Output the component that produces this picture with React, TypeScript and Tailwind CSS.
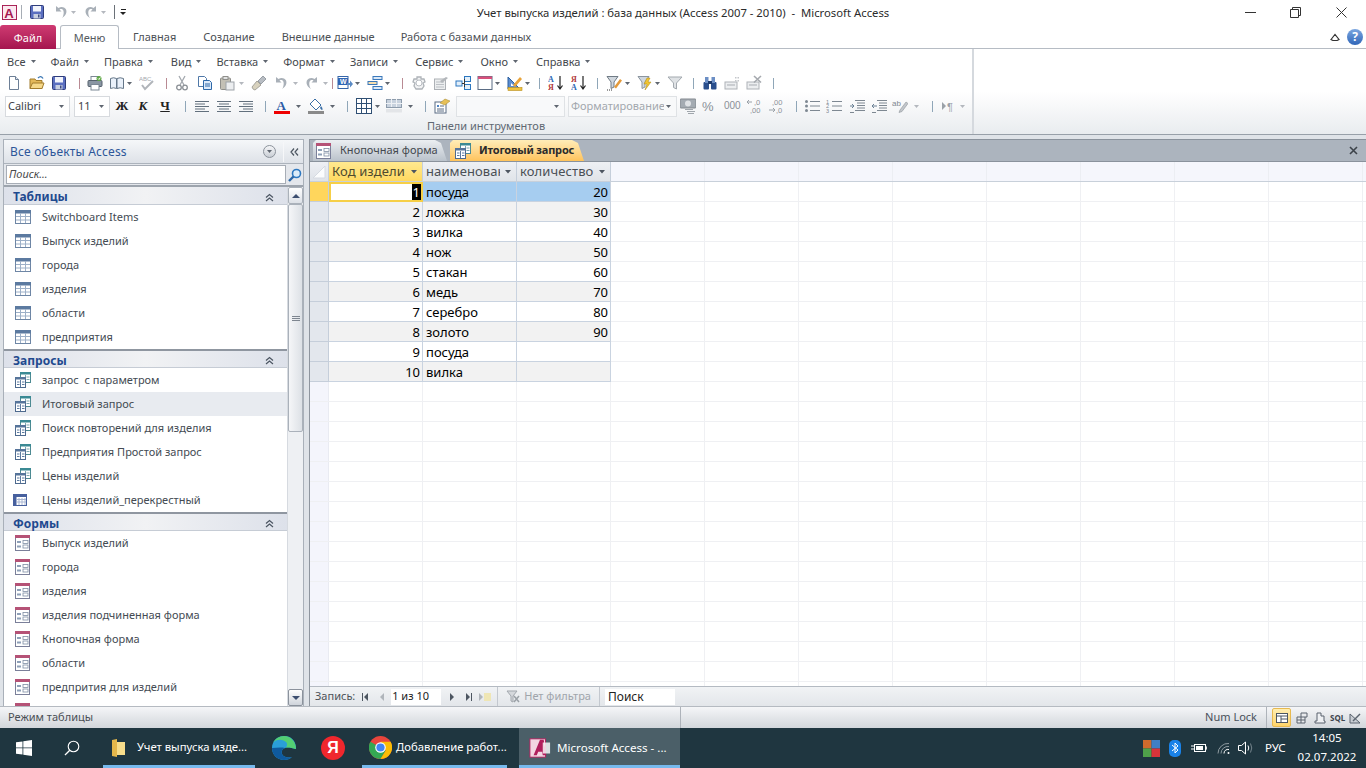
import React from "react";

type P = { className?: string };
const S = ({ className = "", children }: P & { children: React.ReactNode }) => (
  <svg viewBox="0 0 16 16" className={`w-4 h-4 shrink-0 ${className}`}>{children}</svg>
);
const Arrow = ({ className = "" }: P) => (
  <svg viewBox="0 0 5 3" className={`w-[5px] h-[3px] shrink-0 ${className}`}><path d="M0 0h5L2.5 3z" fill="#5f6670" /></svg>
);
const ArrowOff = ({ className = "" }: P) => (
  <svg viewBox="0 0 5 3" className={`w-[5px] h-[3px] shrink-0 ${className}`}><path d="M0 0h5L2.5 3z" fill="#b4b8be" /></svg>
);
const Sep = ({ className = "" }: P) => <div className={`w-px h-[11px] shrink-0 bg-[#8fa6b8] ${className}`} />;
const SepR = ({ className = "" }: P) => <div className={`w-px h-[11px] shrink-0 bg-[#b98a93] ${className}`} />;

const New = (p: P) => <S {...p}><path d="M3.5 1.5h6l3 3v10h-9z" fill="#fff" stroke="#6d7f96" /><path d="M9.5 1.5v3h3" fill="#dfe6ef" stroke="#6d7f96" /></S>;
const Open = (p: P) => <S {...p}><path d="M1 4h5l1 1.500h6v8H1z" fill="#e4b95a" stroke="#a27c2d" /><path d="M3.500 8H15l-2 5.500H1z" fill="#f6d98a" stroke="#a27c2d" /><path d="M9 3q3-3 5 .5" fill="none" stroke="#3c78b4" strokeWidth="1.400" /></S>;
const Save = (p: P) => <S {...p}><rect x="1.500" y="1.500" width="13" height="13" rx="1" fill="#5b6fc0" stroke="#2f3d7c" /><rect x="4" y="2" width="8" height="5.500" fill="#f2f4fb" /><rect x="4.500" y="10" width="7" height="4.500" fill="#c9d0e0" /><rect x="9" y="10.500" width="1.500" height="3" fill="#3c4a80" /></S>;
const Print = (p: P) => <S {...p}><rect x="4" y="1.500" width="8" height="4" fill="#fff" stroke="#7b8794" /><rect x="1" y="5.500" width="14" height="6" rx="1" fill="#8a96a3" stroke="#55606c" /><rect x="4" y="9.500" width="8" height="5.500" fill="#fff" stroke="#7b8794" /><circle cx="12" cy="3.500" r="2.500" fill="#5fa845" /><path d="M11 3.500l1 1 1.300-2" stroke="#fff" fill="none" /></S>;
const Preview = (p: P) => <S {...p}><path d="M1.500 3.500q3-1.500 6 0v10q-3-1.500-6 0zM8 3.500q3-1.500 6.500 0v10q-3.500-1.500-6.500 0z" fill="#eaf1fa" stroke="#657789" /></S>;
const Spell = (p: P) => <S {...p}><text x="0" y="6" fontSize="6" fontFamily="Liberation Sans" fill="#a5a9ae">ABC</text><path d="M3 10l3 4 8-8" stroke="#b1b5ba" strokeWidth="2" fill="none" /></S>;
const Cut = (p: P) => <S {...p}><path d="M5 1l5 9M11 1L6 10" stroke="#a3a8ae" strokeWidth="1.300" /><circle cx="5" cy="12.500" r="2.300" fill="none" stroke="#8b9096" strokeWidth="1.300" /><circle cx="11" cy="12.500" r="2.300" fill="none" stroke="#8b9096" strokeWidth="1.300" /></S>;
const Copy = (p: P) => <S {...p}><path d="M1.500 1.500h6l2 2v8h-8z" fill="#fff" stroke="#4f78a8" /><path d="M6.500 5.500h6l2 2v7h-8z" fill="#dceafa" stroke="#2e68a8" /><path d="M8 9h5M8 11h5" stroke="#2e68a8" /></S>;
const Paste = (p: P) => <S {...p}><rect x="1.500" y="3" width="10" height="11.500" rx="1" fill="#c3c0b5" stroke="#8f8f8b" /><rect x="4" y="1.500" width="5" height="3" fill="#e1e2e2" stroke="#8f8f8b" /><rect x="7" y="7" width="8" height="8" fill="#eceef0" stroke="#9ea3a9" /></S>;
const Brush = (p: P) => <S {...p}><path d="M1 12l5-6 4 4-6 5q-2 0-3-3z" fill="#d8d2be" stroke="#a5a39a" /><path d="M7 6l5-5 3 3-5 5z" fill="#b8bdc3" stroke="#989ea5" /></S>;
const Undo = ({ className = "", c = "#a9b0b8" }: P & { c?: string }) => <S className={className}><path d="M3 2v5.500h5.500L6.500 5.500c3-1.500 5.500 1 3.500 7l-1 1.500c5-3 6-8.500 2-10.500-2-1-4-.5-5.500.5z" fill={c} /></S>;
const Redo = ({ className = "", c = "#a9b0b8" }: P & { c?: string }) => <S className={className}><path d="M13 2v5.500H7.500l2-2c-3-1.500-5.500 1-3.500 7l1 1.500c-5-3-6-8.500-2-10.500 2-1 4-.5 5.500.5z" fill={c} /></S>;
const Word = (p: P) => <S {...p}><rect x="1" y="1.500" width="10" height="12" fill="#fff" stroke="#3565a8" /><rect x="1" y="3" width="10" height="7" fill="#2f66b5" /><text x="3" y="9" fontSize="7" fontWeight="bold" fontFamily="Liberation Sans" fill="#fff">W</text><path d="M10 8h3V5.500L16 9l-3 3.500V10h-3z" fill="#5a8ac4" /></S>;
const Code = (p: P) => <S {...p}><rect x="6" y="1.500" width="9" height="3" fill="#dbe9f8" stroke="#3b79bb" /><rect x="1" y="6.500" width="9" height="3" fill="#f6dfb0" stroke="#3b79bb" /><rect x="6" y="11.500" width="9" height="3" fill="#dbe9f8" stroke="#3b79bb" /></S>;
const Ring = (p: P) => <S {...p}><path d="M3 4h3V2h4v2h3l1 3-2 1 1 3-2 3H5l-2-3 1-3-2-1z" fill="#f2f3f4" stroke="#aeb3b8" strokeWidth="1.300" /><circle cx="8" cy="8" r="3" fill="#fff" stroke="#b9bdc2" /></S>;
const FormOff = (p: P) => <S {...p}><rect x="1.500" y="4" width="11" height="10.500" fill="#eceeef" stroke="#adb1b6" /><path d="M3 7h8M3 9.500h8M3 12h8" stroke="#bcc0c5" /><path d="M7 6l6-4 2 1-6 5z" fill="#b3b7bb" /></S>;
const Rel = (p: P) => <S {...p}><rect x="1" y="6" width="6" height="5" fill="#e2effa" stroke="#2c77c0" /><rect x="9.500" y="1.500" width="6" height="5" fill="#e2effa" stroke="#2c77c0" /><rect x="9.500" y="9.500" width="6" height="5" fill="#e2effa" stroke="#2c77c0" /><path d="M7 8.500h2.500V4M9.500 8.500V12" stroke="#333" fill="none" /></S>;
const Win = (p: P) => <S {...p}><rect x="1" y="1.500" width="14" height="13" fill="#fff" stroke="#5a6c84" /><rect x="1" y="1.500" width="14" height="2.500" fill="#d9507b" /></S>;
const Design = (p: P) => <S {...p}><path d="M1 2v12h12z" fill="#5d8ed0" stroke="#2b5f9f" /><path d="M4 8v3h3z" fill="#fff" /><rect x="1" y="12.500" width="14" height="3" fill="#f0c23e" stroke="#b78d1b" strokeWidth=".6" /><path d="M6 10L13 2l2 2-7 8z" fill="#e8a33a" /></S>;
const Az = (p: P) => <S {...p}><text x="0" y="7" fontSize="8" fontWeight="bold" fontFamily="Liberation Serif" fill="#2a66b4">А</text><text x="0" y="15" fontSize="8" fontWeight="bold" fontFamily="Liberation Serif" fill="#b13a3a">Я</text><path d="M12 1v12M9.500 10.500L12 14l2.500-3.500" fill="none" stroke="#222" strokeWidth="1.200" /></S>;
const Za = (p: P) => <S {...p}><text x="0" y="7" fontSize="8" fontWeight="bold" fontFamily="Liberation Serif" fill="#b13a3a">Я</text><text x="0" y="15" fontSize="8" fontWeight="bold" fontFamily="Liberation Serif" fill="#2a66b4">А</text><path d="M12 1v12M9.500 10.500L12 14l2.500-3.500" fill="none" stroke="#222" strokeWidth="1.200" /></S>;
const Filter1 = (p: P) => <S {...p}><path d="M1 1.500h11L8 7v5L5 13.500V7z" fill="#d0d7de" stroke="#707b85" /><path d="M8 12l6-8 2 1.500-6 8z" fill="#e39a3b" /><path d="M1 15h5" stroke="#333" strokeDasharray="1 1" /></S>;
const Filter2 = (p: P) => <S {...p}><path d="M1 1.500h11L8 7v5L5 13.500V7z" fill="#d0d7de" stroke="#8b959f" /><path d="M10 3l-3 6h3l-2 6 6-8h-3l2-4z" fill="#f2c530" stroke="#a98716" strokeWidth=".5" /></S>;
const Funnel = (p: P) => <S {...p}><path d="M1 2h14L9.500 8v6l-3-1.500V8z" fill="#dfe2e5" stroke="#a3a9af" /></S>;
const Bin = (p: P) => <S {...p}><rect x="1.500" y="7" width="5.500" height="7.500" rx="1" fill="#2a4f8d" /><rect x="9" y="7" width="5.500" height="7.500" rx="1" fill="#2a4f8d" /><rect x="3" y="2" width="3.500" height="6" fill="#6c8fc5" /><rect x="9.500" y="2" width="3.500" height="6" fill="#6c8fc5" /><rect x="6" y="6" width="4" height="3" fill="#1d3a6c" /></S>;
const Rec1 = (p: P) => <S {...p}><rect x="1" y="7" width="12" height="7" fill="#eceef0" stroke="#aeb2b7" /><path d="M3 10h8" stroke="#a7abb1" /><path d="M11 2h1.500v1.500H11zM13.500 2H15v1.500h-1.500zM11 5h1.500v1.500H11zM13.500 5H15v1.500h-1.500z" fill="#c3c6ca" /></S>;
const Rec2 = (p: P) => <S {...p}><rect x="1" y="7" width="12" height="7" fill="#eceef0" stroke="#aeb2b7" /><path d="M3 10h8" stroke="#a7abb1" /><path d="M8 1l7 6.500M15 1L8 7.500" stroke="#a5a9ae" strokeWidth="1.600" /></S>;
const AlignL = (p: P) => <S {...p}><path d="M1 3.500h14M1 6h10M1 8.500h14M1 11h10M1 13.500h14" stroke="#62707d" /></S>;
const AlignC = (p: P) => <S {...p}><path d="M1 3.500h14M3 6h10M1 8.500h14M3 11h10M1 13.500h14" stroke="#62707d" /></S>;
const AlignR = (p: P) => <S {...p}><path d="M1 3.500h14M5 6h10M1 8.500h14M5 11h10M1 13.500h14" stroke="#62707d" /></S>;
const FontA = (p: P) => <S {...p}><text x="2.500" y="12" fontSize="13" fontWeight="bold" fontFamily="Liberation Serif" fill="#2a5aa5">A</text><rect x="0" y="13" width="16" height="3" fill="#ee0000" /></S>;
const Fill = (p: P) => <S {...p}><path d="M7 1l6 6-5 5-6-6z" fill="#fff" stroke="#3a6ea5" /><path d="M13 8q2 2 1.500 3.500T12 10z" fill="#3a6ea5" /><rect x="0" y="13" width="16" height="3" fill="#8a8a8a" /></S>;
const Grid = (p: P) => <S {...p}><rect x=".5" y=".5" width="15" height="15" fill="#fff" stroke="#2f4f73" /><path d="M5.500 0v16M10.500 0v16M0 5.500h16M0 10.500h16" stroke="#2f4f73" /></S>;
const AltRows = (p: P) => <S {...p}><rect x=".5" y="1.500" width="15" height="8" fill="#c8d2de" stroke="#8d9cac" /><path d="M0 5.500h16M5.500 1v8M10.500 1v8" stroke="#eef1f5" /><rect x="0" y="11" width="16" height="3.500" fill="#e3e5e8" /></S>;
const Props = (p: P) => <S {...p}><rect x="1" y="4" width="11" height="11" fill="#fff" stroke="#5b6d84" /><rect x="3" y="7" width="2" height="2" fill="#4e84c4" /><path d="M6 8h4M3 11h7M3 13h7" stroke="#5b6d84" /><path d="M6 5l5-4 5 2-5 4z" fill="#e7c058" stroke="#a18429" strokeWidth=".5" /></S>;
const Money = (p: P) => <S {...p}><rect x="0" y="1" width="16" height="9" rx="1" fill="#a4abb2" stroke="#83898f" /><ellipse cx="8" cy="5.500" rx="3" ry="3" fill="#dfe2e5" /><path d="M5 11.500h8M7 13.500h8M8 15.500h6" stroke="#a0a6ac" /></S>;
const Pct = (p: P) => <S {...p}><text x="1" y="13" fontSize="13" fontFamily="Liberation Sans" fill="#8a9097">%</text></S>;
const Dec1 = (p: P) => <S {...p}><text x="8" y="7" fontSize="7.500" fontFamily="Liberation Sans" fill="#8a9097">,0</text><text x="4" y="15" fontSize="7.500" fontFamily="Liberation Sans" fill="#8a9097">,00</text><path d="M6 4H1m2-2L1 4l2 2" stroke="#9aa1a8" fill="none" /></S>;
const Dec2 = (p: P) => <S {...p}><text x="4" y="7" fontSize="7.500" fontFamily="Liberation Sans" fill="#8a9097">,00</text><text x="8" y="15" fontSize="7.500" fontFamily="Liberation Sans" fill="#8a9097">,0</text><path d="M1 12h6m-2-2l2 2-2 2" stroke="#9aa1a8" fill="none" /></S>;
const Bullets = (p: P) => <S {...p}><path d="M6 3.500h10M6 8h10M6 12.500h10" stroke="#7e8892" /><circle cx="2.500" cy="3.500" r="1.500" fill="#7e8892" /><circle cx="2.500" cy="8" r="1.500" fill="#7e8892" /><circle cx="2.500" cy="12.500" r="1.500" fill="#7e8892" /></S>;
const Numbers = (p: P) => <S {...p}><path d="M6 3.500h10M6 8h10M6 12.500h10" stroke="#7e8892" /><text x="0" y="5.500" fontSize="5.500" fontFamily="Liberation Sans" fill="#7e8892">1</text><text x="0" y="10" fontSize="5.500" fontFamily="Liberation Sans" fill="#7e8892">2</text><text x="0" y="15" fontSize="5.500" fontFamily="Liberation Sans" fill="#7e8892">3</text></S>;
const IndentA = (p: P) => <S {...p}><path d="M6 2.500h10M8 5h8M8 7.500h8M8 10h8M6 12.500h10M1 14.500h4" stroke="#7e8892" /><path d="M1 8h4m-2-2l2 2-2 2" stroke="#6a8094" fill="none" /></S>;
const IndentB = (p: P) => <S {...p}><path d="M6 2.500h10M8 5h8M8 7.500h8M8 10h8M6 12.500h10M1 14.500h4" stroke="#7e8892" /><path d="M6 8H1m2-2L1 8l2 2" stroke="#6a8094" fill="none" /></S>;
const Ab = (p: P) => <S {...p}><text x="0" y="8" fontSize="8" fontFamily="Liberation Sans" fill="#7f8790">ab</text><path d="M8 12l6-8 2 1.500-6 8-3 1z" fill="#c2c6cb" stroke="#8f959b" strokeWidth=".6" /></S>;
const Para = (p: P) => <S {...p}><path d="M1 4v8l4-4z" fill="#9aa1a8" /><text x="6" y="13" fontSize="11" fontFamily="Liberation Sans" fill="#9aa1a8">¶</text></S>;

const TableI = ({ className = "" }: P) => (
  <svg viewBox="0 0 16 14" className={`w-4 h-[14px] shrink-0 ${className}`}>
    <rect x=".5" y=".5" width="15" height="13" fill="#fff" stroke="#6e86a5" />
    <rect x="0" y="0" width="16" height="3.500" fill="#5c7aa0" />
    <path d="M5.500 3v10M10.500 3v10M1 6.500h14M1 10h14" stroke="#9db0c8" />
  </svg>
);
const QueryI = ({ className = "" }: P) => (
  <svg viewBox="0 0 16 16" className={`w-4 h-4 shrink-0 ${className}`}>
    <rect x="5.500" y=".5" width="10" height="10" fill="#fff" stroke="#4d8a92" />
    <rect x="5" y="0" width="11" height="2.500" fill="#3b8a94" />
    <path d="M10.500 3v7M11.500 5h3M11.500 7.500h3" stroke="#7ca7ae" />
    <rect x=".5" y="5.500" width="10" height="10" fill="#fff" stroke="#4e6a8e" />
    <rect x="0" y="5" width="11" height="2.500" fill="#56749a" />
    <path d="M5.500 8v7M2 10h2.500M7 10h2.500M2 12.500h2.500M7 12.500h2.500" stroke="#5d7ba0" />
  </svg>
);
const CrossI = ({ className = "" }: P) => (
  <svg viewBox="0 0 14 12" className={`w-[14px] h-3 shrink-0 ${className}`}>
    <rect x=".5" y=".5" width="13" height="11" fill="#fff" stroke="#47609e" />
    <rect x="0" y="0" width="14" height="3" fill="#47609e" />
    <rect x="0" y="0" width="3.500" height="12" fill="#47609e" />
    <path d="M6 4v7M9 4v7M12 4v7M4 5.500h9M4 8h9" stroke="#a9b6d2" />
  </svg>
);
const FormI = ({ className = "" }: P) => (
  <svg viewBox="0 0 15 16" className={`w-[15px] h-4 shrink-0 ${className}`}>
    <rect x=".5" y=".5" width="14" height="15" fill="#fff" stroke="#7a7f99" />
    <rect x="0" y="0" width="15" height="3" fill="#b55276" />
    <rect x="2" y="6" width="4" height="2" fill="#8ea0b8" />
    <rect x="2" y="10.500" width="4" height="2" fill="#8ea0b8" />
    <rect x="8" y="5.500" width="5" height="3" fill="#fff" stroke="#7e8da3" strokeWidth=".8" />
    <rect x="8" y="10" width="5" height="3" fill="#fff" stroke="#7e8da3" strokeWidth=".8" />
  </svg>
);
const DoubleUp = ({ className = "" }: P) => (
  <svg viewBox="0 0 9 9" className={`w-[9px] h-[9px] shrink-0 ${className}`}>
    <path d="M1 4.500l3.500-3 3.500 3M1 8l3.500-3 3.500 3" fill="none" stroke="#4b5562" strokeWidth="1.200" />
  </svg>
);
const AccessLogo = ({ className = "" }: P) => (
  <svg viewBox="0 0 16 16" className={`shrink-0 ${className}`}>
    <rect x=".5" y=".5" width="15" height="15" fill="#fce9f0" stroke="#a5184f" />
    <text x="2.500" y="13.500" fontSize="14" fontWeight="bold" fontFamily="Liberation Sans" fill="#a5184f">A</text>
  </svg>
);
const Small = ({ c, d }: { c: string; d: string }) => (
  <svg viewBox="0 0 8 8" className="w-2 h-2 shrink-0"><path d={d} fill={c} /></svg>
);

const tables = ["Switchboard Items", "Выпуск изделий", "города", "изделия", "области", "предприятия"];
const queries = ["запрос  с параметром", "Итоговый запрос", "Поиск повторений для изделия", "Предприятия Простой запрос", "Цены изделий", "Цены изделий_перекрестный"];
const forms = ["Выпуск изделий", "города", "изделия", "изделия подчиненная форма", "Кнопочная форма", "области", "предпрития для изделий", ""];
const rows: [number, string, string][] = [
  [1, "посуда", "20"], [2, "ложка", "30"], [3, "вилка", "40"], [4, "нож", "50"], [5, "стакан", "60"],
  [6, "медь", "70"], [7, "серебро", "80"], [8, "золото", "90"], [9, "посуда", ""], [10, "вилка", ""],
];
const blankCols = [0, 1, 2, 3, 4, 5, 6, 7, 8];
const blankRows = Array.from({ length: 16 }, (_, i) => i);

const GroupHead = ({ title, className = "" }: P & { title: string }) => (
  <div className={`h-[18px] flex items-center justify-between pl-[9px] pr-[13px] pt-[3px] bg-gradient-to-r from-[#dde1ea] via-[#f1f2f4] to-[#dde1ea] border-b border-[#c6ccd5] ${className}`}>
    <span className="text-[12px] font-bold text-[#1f4a8f]">{title}</span>
    <DoubleUp />
  </div>
);
const NavItem = ({ icon, text, active }: { icon: React.ReactNode; text: string; active?: boolean }) => (
  <div className={`h-6 flex items-center pl-[11px] text-[11px] text-[#444b53] whitespace-pre ${active ? "bg-[#e8ebf0]" : ""}`}>
    <span className="w-[27px] flex items-center">{icon}</span>
    {text}
  </div>
);
const HeaderCell = ({ text, active, className = "" }: P & { text: string; active?: boolean }) => (
  <div className={`w-[94px] h-full shrink-0 flex items-center pl-[3px] pr-[2px] border-r border-[#c5ceda] text-[13px] ${active ? "bg-gradient-to-b from-[#ffe98f] to-[#ffd95f] text-[#4e4a2e]" : "bg-gradient-to-b from-[#eef0f4] to-[#e0e4e9] text-[#4a4f55]"} ${className}`}>
    <span className="flex-1 overflow-hidden whitespace-nowrap tracking-[0.1px]">{text}</span>
    <svg viewBox="0 0 12 8" className="w-3 h-2 shrink-0 ml-[2px]"><path d="M3 2h6L6 5.500z" fill="#4d5661" /></svg>
  </div>
);

export default function App() {
  return (
    <div className="w-[1366px] h-[768px] flex flex-col overflow-hidden bg-white font-['Noto_Sans','Open_Sans',sans-serif] text-[#3f4348]">
      {/* title bar */}
      <div className="h-6 grid grid-cols-[1fr_auto_1fr] items-center bg-white shrink-0">
        <div className="flex items-center h-full">
          <AccessLogo className="w-[15px] h-[15px] ml-[2px]" />
          <div className="w-px h-[14px] bg-[#a7adb5] ml-1" />
          <Save className="ml-[7px]" />
          <Undo className="ml-2" />
          <ArrowOff className="ml-[2px]" />
          <Redo className="ml-[7px]" />
          <ArrowOff className="ml-[2px]" />
          <div className="w-px h-[14px] bg-[#6b7178] ml-2" />
          <div className="ml-[5px] flex flex-col items-center gap-[2px]">
            <div className="w-[5px] h-px bg-[#222]" />
            <div className="w-0 h-0 border-l-[3px] border-r-[3px] border-t-[3px] border-l-transparent border-r-transparent border-t-[#222]" />
          </div>
        </div>
        <div className="text-[11.3px] pt-[2px] text-[#2b2b2b] whitespace-pre">Учет выпуска изделий : база данных (Access 2007 - 2010)  -  Microsoft Access</div>
        <div className="flex items-center justify-end h-full pr-[19px]">
          <div className="w-[11px] h-px bg-[#333]" />
          <svg viewBox="0 0 11 11" className="w-[11px] h-[11px] ml-[34px]"><path d="M.5 2.500h8v8h-8zM2.500 2.500v-2h8v8h-2" fill="none" stroke="#333" /></svg>
          <svg viewBox="0 0 11 11" className="w-[11px] h-[11px] ml-[35px]"><path d="M.5.500l10 10M10.500.500l-10 10" stroke="#333" /></svg>
        </div>
      </div>
      {/* ribbon tabs */}
      <div className="h-[25px] flex items-end shrink-0 border-b border-[#b6bcc4] text-[11px]">
        <div className="w-14 h-6 pt-[2px] mb-[-1px] rounded-t-[3px] bg-gradient-to-b from-[#cf3a72] to-[#a5154f] text-white flex items-center justify-center">Файл</div>
        <div className="w-[59px] h-6 pt-[2px] mb-[-1px] ml-1 rounded-t-[3px] bg-white border border-b-0 border-[#b6bcc4] flex items-center justify-center text-[#565b61]">Меню</div>
        <div className="h-6 pt-[2px] flex items-center ml-[14px] text-[#4c5055]">Главная</div>
        <div className="h-6 pt-[2px] flex items-center ml-[27px] text-[#4c5055]">Создание</div>
        <div className="h-6 pt-[2px] flex items-center ml-[27px] text-[#4c5055]">Внешние данные</div>
        <div className="h-6 pt-[2px] flex items-center ml-[26px] text-[#4c5055]">Работа с базами данных</div>
        <div className="flex-1 h-6 pt-[2px] flex items-center justify-end pr-[3px]">
          <svg viewBox="0 0 10 8" className="w-[10px] h-2 mr-[7px]"><path d="M1 6.500L5 1.500l4 5-2 1H3z" fill="none" stroke="#333" strokeWidth="1.200" /></svg>
          <div className="w-4 h-4 rounded-full bg-gradient-to-b from-[#7ba6e0] to-[#2f66b8] text-white text-[12px] font-bold flex items-center justify-center">?</div>
        </div>
      </div>
      {/* ribbon */}
      <div className="h-[86px] shrink-0 flex bg-gradient-to-b from-white via-white to-[#e9ecef] border-b border-[#98a0a9]">
        <div className="w-[974px] shrink-0 flex flex-col border-r-2 border-[#d5d9de]">
          <div className="h-[26px] flex items-center text-[11px] text-[#44484d]">
            <span className="ml-[7px]">Все</span><Arrow className="ml-[5px]" />
            <span className="ml-[15px]">Файл</span><Arrow className="ml-[5px]" />
            <span className="ml-[15px]">Правка</span><Arrow className="ml-[5px]" />
            <span className="ml-[18px]">Вид</span><Arrow className="ml-[5px]" />
            <span className="ml-[15px]">Вставка</span><Arrow className="ml-[5px]" />
            <span className="ml-[15px]">Формат</span><Arrow className="ml-[5px]" />
            <span className="ml-[15px]">Записи</span><Arrow className="ml-[5px]" />
            <span className="ml-[17px]">Сервис</span><Arrow className="ml-[5px]" />
            <span className="ml-[17px]">Окно</span><Arrow className="ml-[5px]" />
            <span className="ml-[18px]">Справка</span><Arrow className="ml-[5px]" />
          </div>
          <div className="h-[18px] flex items-center">
            <New className="ml-[6px]" /><Open className="ml-[7px]" /><Save className="ml-[6px]" /><SepR className="ml-[12px]" />
            <Print className="ml-[7px]" /><Preview className="ml-[6px]" /><Arrow className="ml-[2px]" /><Spell className="ml-[7px]" /><SepR className="ml-[11px]" />
            <Cut className="ml-[7px]" /><Copy className="ml-[7px]" /><Paste className="ml-[6px]" /><ArrowOff className="ml-1" /><Brush className="ml-[7px]" />
            <Undo className="ml-[6px]" /><ArrowOff className="ml-1" /><Redo className="ml-[6px]" /><ArrowOff className="ml-[3px]" /><SepR className="ml-1" />
            <Word className="ml-1" /><Arrow className="ml-[2px]" /><Code className="ml-[7px]" /><Arrow className="ml-[2px]" /><SepR className="ml-[12px]" />
            <Ring className="ml-2" /><FormOff className="ml-[6px]" /><Rel className="ml-[6px]" /><Win className="ml-[6px]" /><Arrow className="ml-[2px]" /><Design className="ml-[7px]" /><Arrow className="ml-[2px]" /><Sep className="ml-[9px]" />
            <Az className="ml-2" /><Za className="ml-[7px]" /><Sep className="ml-[10px]" />
            <Filter1 className="ml-2" /><Arrow className="ml-[3px]" /><Filter2 className="ml-[7px]" /><Arrow className="ml-[2px]" /><Funnel className="ml-[7px]" /><Sep className="ml-[10px]" />
            <Bin className="ml-2" /><Rec1 className="ml-[6px]" /><Rec2 className="ml-[6px]" /><Sep className="ml-[11px]" />
          </div>
          <div className="h-6 mt-[2px] flex items-center">
            <div className="w-[65px] h-[21px] ml-[5px] shrink-0 bg-white border border-[#d7dade] flex items-center justify-between pl-[2px] pr-[5px] text-[11px] text-[#3e4247]">Calibri<Arrow /></div>
            <div className="w-9 h-[21px] ml-1 shrink-0 bg-white border border-[#d7dade] flex items-center justify-between pl-[3px] pr-[5px] text-[11px] text-[#3e4247]">11<Arrow /></div>
            <span className="w-4 ml-1 text-center font-['Liberation_Serif'] font-bold text-[13px] text-[#222]">Ж</span>
            <span className="w-4 ml-[5px] text-center font-['Liberation_Serif'] font-bold italic text-[13px] text-[#222]">К</span>
            <span className="w-4 ml-[6px] text-center font-['Liberation_Serif'] font-bold underline text-[13px] text-[#222]">Ч</span>
            <Sep className="ml-3" /><AlignL className="ml-2" /><AlignC className="ml-[6px]" /><AlignR className="ml-[6px]" /><Sep className="ml-[11px]" />
            <FontA className="ml-2" /><Arrow className="ml-[6px]" /><Fill className="ml-[7px]" /><Arrow className="ml-[6px]" /><Sep className="ml-3" />
            <Grid className="ml-2" /><Arrow className="ml-[3px]" /><AltRows className="ml-[6px]" /><Arrow className="ml-[6px]" /><Sep className="ml-3" /><Props className="ml-2" />
            <div className="w-[109px] h-[21px] ml-[6px] shrink-0 bg-[#f8f9fa] border border-[#dfe2e5] flex items-center justify-end pr-[5px]"><Arrow /></div>
            <div className="w-[109px] h-[21px] ml-[3px] shrink-0 bg-[#f8f9fa] border border-[#dfe2e5] flex items-center pl-[2px] pr-[5px] text-[11px] text-[#a3a8ae] overflow-hidden whitespace-nowrap"><span className="flex-1 overflow-hidden">Форматирование</span><Arrow className="ml-[2px]" /></div>
            <Money className="ml-[3px]" /><Pct className="ml-[5px]" />
            <span className="w-4 ml-[7px] text-center text-[10px] leading-none text-[#8a9097] font-['Liberation_Sans']">000</span>
            <Dec1 className="ml-[6px]" /><Dec2 className="ml-[6px]" /><Sep className="ml-3" />
            <Bullets className="ml-[7px]" /><Numbers className="ml-[6px]" /><IndentA className="ml-[7px]" /><IndentB className="ml-[6px]" /><Ab className="ml-[5px]" /><ArrowOff className="ml-[6px]" /><Sep className="ml-[13px]" />
            <Para className="ml-2" /><ArrowOff className="ml-[3px]" />
          </div>
          <div className="h-4 flex items-center justify-center text-[11px] text-[#5f6872]">Панели инструментов</div>
        </div>
      </div>
      {/* main */}
      <div className="flex-1 min-h-0 flex bg-[#dfe3e8] pt-1 border-b border-[#b5bac1]">
        {/* nav pane */}
        <div className="w-[301px] ml-[3px] shrink-0 flex flex-col bg-white border-l border-r border-[#a9b0b9] min-h-0">
          <div className="h-[25px] shrink-0 flex items-center justify-between pl-[6px] bg-gradient-to-b from-[#f5f7f9] to-[#dee2e8] border-y border-[#acb3bc]">
            <span className="text-[12px] text-[#2d5699] tracking-[0.2px]">Все объекты Access</span>
            <div className="flex items-center h-full">
              <div className="w-[13px] h-[13px] rounded-full border border-[#8b929b] bg-gradient-to-b from-[#f5f6f8] to-[#c9ced5] flex items-center justify-center"><Arrow /></div>
              <div className="w-px h-5 bg-[#f6f7f9] ml-[7px]" />
              <svg viewBox="0 0 9 8" className="w-[9px] h-2 ml-[6px] mr-[4px]"><path d="M4 .5L1 4l3 3.500M8 .5L5 4l3 3.500" fill="none" stroke="#4d5661" strokeWidth="1.200" /></svg>
            </div>
          </div>
          <div className="h-[23px] shrink-0 flex items-center pl-[2px] bg-[#e4e7ec] border-b-2 border-[#9da4ad]">
            <div className="w-[280px] h-[19px] bg-white border border-[#a7adb6] flex items-center pl-[2px] text-[11px] italic text-[#4a4a4a]">Поиск...</div>
            <svg viewBox="0 0 14 14" className="w-[14px] h-[14px] ml-[2px]"><circle cx="8.500" cy="5.500" r="4" fill="#dcecf9" stroke="#2d78c0" strokeWidth="1.600" /><path d="M5.500 8.500L1 13" stroke="#2d68a8" strokeWidth="2.400" /></svg>
          </div>
          <div className="flex-1 min-h-0 flex">
            <div className="flex-1 min-w-0 overflow-hidden">
              <GroupHead title="Таблицы" />
              {tables.map((t) => <NavItem key={t} icon={<TableI />} text={t} />)}
              <GroupHead title="Запросы" className="h-[19px] border-t-2 border-t-[#8f96a0]" />
              {queries.map((t, i) => <NavItem key={t} icon={i === 5 ? <CrossI className="-ml-[2px]" /> : <QueryI />} text={t} active={i === 1} />)}
              <GroupHead title="Формы" className="h-[19px] border-t-2 border-t-[#8f96a0]" />
              {forms.map((t, i) => <NavItem key={i} icon={<FormI />} text={t} />)}
            </div>
            <div className="w-4 shrink-0 flex flex-col bg-[#eef0f3] border-l border-[#d6dae0]">
              <div className="h-[17px] bg-gradient-to-b from-white to-[#dde1e7] border border-[#aab1ba] rounded-[2px] flex items-center justify-center"><svg viewBox="0 0 8 4" className="w-2 h-1"><path d="M4 0l4 4H0z" fill="#3d4f70" /></svg></div>
              <div className="h-[228px] bg-gradient-to-r from-[#f5f6f8] to-[#dde1e6] border border-[#aab1ba] rounded-[2px] flex flex-col items-center justify-center gap-px">
                <div className="w-2 h-px bg-[#7e8690]" /><div className="w-2 h-px bg-[#7e8690]" /><div className="w-2 h-px bg-[#7e8690]" />
              </div>
              <div className="flex-1" />
              <div className="h-[17px] bg-gradient-to-b from-white to-[#cfd4db] border border-[#8b929c] rounded-[2px] flex items-center justify-center"><svg viewBox="0 0 8 4" className="w-2 h-1"><path d="M4 4l4-4H0z" fill="#3d4f70" /></svg></div>
            </div>
          </div>
        </div>
        <div className="w-[5px] shrink-0 bg-[#dfe3e8]" />
        {/* document */}
        <div className="flex-1 min-w-0 flex flex-col bg-white border-l border-[#8e959e]">
          <div className="h-[23px] shrink-0 flex items-end pl-[3px] bg-[#acb4be] border-y border-[#8a929c]">
            <div className="w-[134px] h-[21px] flex items-center pl-[3px] [clip-path:polygon(3px_0,122px_0,128px_3px,134px_100%,0_100%,0_3px)] bg-gradient-to-b from-[#eceff2] to-[#bac2cb] text-[11px] text-[#43484e]"><FormI /><span className="ml-[9px]">Кнопочная форма</span></div>
            <div className="w-[134px] h-[21px] ml-[3px] flex items-center pl-[5px] [clip-path:polygon(3px_0,122px_0,128px_3px,134px_100%,0_100%,0_3px)] bg-gradient-to-b from-[#ffedb8] to-[#ffc35a] text-[11px] font-bold tracking-[-0.2px] text-[#2b2b2b]"><QueryI /><span className="ml-2">Итоговый запрос</span></div>
            <div className="flex-1 h-full flex items-center justify-end pr-2">
              <svg viewBox="0 0 9 9" className="w-[9px] h-[9px]"><path d="M1 1l7 7M8 1L1 8" stroke="#3d434a" strokeWidth="1.600" /></svg>
            </div>
          </div>
          <div className="flex-1 min-h-0 overflow-hidden bg-white text-[13px]">
            <div className="h-5 flex border-b border-[#c8d0da] bg-[#f5f6fc]">
              <div className="w-[19px] shrink-0 bg-gradient-to-b from-[#eef0f4] to-[#dee2e8] border-r border-[#c5ceda] relative">
                <svg viewBox="0 0 14 14" className="w-[14px] h-[14px] absolute right-[2px] bottom-[2px]"><path d="M13 1v12H1z" fill="#fbfcfd" stroke="#d5dae1" /></svg>
              </div>
              <HeaderCell text="Код издели" active />
              <HeaderCell text="наименован" />
              <HeaderCell text="количество" />
              {blankCols.map((c) => <div key={c} className="w-[94px] shrink-0 border-r border-[#eceef3]" />)}
            </div>
            {rows.map(([n, name, q], i) => (
              <div key={n} className={`h-5 flex ${i % 2 ? "bg-[#f2f2f2]" : "bg-white"}`}>
                <div className={`w-[19px] shrink-0 border-r border-b border-[#c5ceda] ${i === 0 ? "bg-[#ffd65c]" : "bg-[#e3e7ed]"}`} />
                {i === 0 ? (
                  <div className="w-[94px] shrink-0 flex items-center justify-end bg-white border-2 border-[#f6cf46] text-black pr-0"><span className="bg-black text-white leading-[16px] px-px">1</span></div>
                ) : (
                  <div className="w-[94px] shrink-0 flex items-center justify-end pt-[2px] pr-[2px] border-r border-b border-[#c9d3e0] text-black">{n}</div>
                )}
                <div className={`w-[94px] shrink-0 flex items-center pt-[2px] pl-[3px] border-r border-b border-[#c9d3e0] text-black ${i === 0 ? "bg-[#a6cdf0]" : ""}`}>{name}</div>
                <div className={`w-[94px] shrink-0 flex items-center justify-end pt-[2px] pr-[2px] border-r border-b border-[#c9d3e0] text-black ${i === 0 ? "bg-[#a6cdf0]" : ""}`}>{q}</div>
                <div className="flex-1 flex bg-white border-b border-[#eff0f3]">
                  {blankCols.map((c) => <div key={c} className="w-[94px] shrink-0 border-r border-[#eff0f3]" />)}
                </div>
              </div>
            ))}
            {blankRows.map((r) => (
              <div key={r} className="h-5 flex border-b border-[#eff0f3]">
                <div className="w-[19px] shrink-0 bg-[#f4f5fc] border-r border-[#e9ebf2]" />
                {[0, 1, 2, ...blankCols].map((c, k) => <div key={k} className="w-[94px] shrink-0 border-r border-[#eff0f3]" />)}
              </div>
            ))}
          </div>
          <div className="h-5 shrink-0 flex items-center bg-gradient-to-b from-[#f1f3f5] to-[#e3e6ea] border-t border-[#b4bac2] text-[11px] text-[#4d5257]">
            <span className="ml-[5px]">Запись:</span>
            <svg viewBox="0 0 8 8" className="w-2 h-2 ml-[6px]"><path d="M1 0h1v8H1zM7 0v8L3 4z" fill="#4d5661" /></svg>
            <svg viewBox="0 0 8 8" className="w-2 h-2 ml-[9px]"><path d="M6 0v8L2 4z" fill="#b0b5bb" /></svg>
            <div className="w-[50px] h-4 ml-[5px] bg-white flex items-center pl-[1px] text-[11px] text-[#222]">1 из 10</div>
            <div className="ml-[7px]"><Small c="#4d5661" d="M2 0v8l4-4z" /></div>
            <svg viewBox="0 0 8 8" className="w-2 h-2 ml-[9px]"><path d="M1 0v8l4-4zM6 0h1v8H6z" fill="#4d5661" /></svg>
            <svg viewBox="0 0 12 8" className="w-3 h-2 ml-[6px]"><path d="M0 0v8l4-4z" fill="#b0b5bb" /><rect x="5" y="0" width="7" height="8" fill="#efe6b5" /></svg>
            <div className="w-px h-full bg-[#c3c8cf] ml-[6px]" />
            <svg viewBox="0 0 14 14" className="w-[14px] h-[14px] ml-[8px]"><path d="M1 1h10L7 6v6L5 11V6z" fill="#d5d8dc" stroke="#a2a7ad" /><path d="M8 6l5 6M13 6l-5 6" stroke="#9aa0a6" strokeWidth="1.500" /></svg>
            <span className="ml-[4px] text-[#a0a5ab]">Нет фильтра</span>
            <div className="w-px h-full bg-[#c3c8cf] ml-[8px]" />
            <div className="w-[70px] h-4 ml-[5px] bg-white flex items-center pl-[3px] text-[12px] text-[#222]">Поиск</div>
          </div>
        </div>
      </div>
      {/* status */}
      <div className="h-[21px] shrink-0 flex items-center bg-gradient-to-b from-[#f5f6f8] to-[#d2d6db] text-[11px] text-[#4a4f55]">
        <span className="ml-2 w-[672px]">Режим таблицы</span>
        <div className="w-px h-full bg-[#aeb3ba]" />
        <span className="ml-auto text-[#48505a]">Num Lock</span>
        <div className="w-px h-full bg-[#aeb3ba] ml-[9px]" />
        <div className="w-[19px] h-[19px] ml-[5px] rounded-[2px] border border-[#e7b950] bg-gradient-to-b from-[#ffeeb0] to-[#ffd469] flex items-center justify-center">
          <svg viewBox="0 0 12 10" className="w-3 h-[10px]"><rect x=".5" y=".5" width="11" height="9" fill="#fff" stroke="#4b5561" /><path d="M0 3h12M5 3v7M5 6h7" stroke="#4b5561" /></svg>
        </div>
        <svg viewBox="0 0 12 12" className="w-3 h-3 ml-[5px]"><path d="M5 1h6v4h-2v6H1V5h4z" fill="#e8eaed" stroke="#5a636e" /><path d="M1 8h8M5 5v6M9 5H5" stroke="#5a636e" /></svg>
        <svg viewBox="0 0 12 12" className="w-3 h-3 ml-[6px]"><path d="M3 1h4v3h3v5h1v2H1V9h2z" fill="#eef0f3" stroke="#5a636e" /></svg>
        <span className="ml-[4px] text-[8px] font-bold text-[#3d444c] w-[14px]">SQL</span>
        <svg viewBox="0 0 12 12" className="w-3 h-3 ml-[5px]"><path d="M1 2v9h10z" fill="#c8cdd3" stroke="#5a636e" /><path d="M4 9l7-7" stroke="#5a636e" strokeWidth="1.500" /></svg>
        <div className="w-[5px]" />
      </div>
      {/* taskbar */}
      <div className="h-10 shrink-0 flex items-stretch bg-[#1f3640] text-white text-[11.3px] font-['Noto_Sans',sans-serif]">
        <div className="w-[48px] flex items-center justify-center">
          <svg viewBox="0 0 16 16" className="w-4 h-4"><path d="M0 2.300l6.500-.9v6.100H0zM7.300 1.300L16 0v7.500H7.300zM0 8.300h6.500v6.200L0 13.700zM7.300 8.300H16V16l-8.700-1.200z" fill="#fff" /></svg>
        </div>
        <div className="w-[48px] flex items-center justify-center">
          <svg viewBox="0 0 16 16" className="w-4 h-4"><circle cx="9.500" cy="6.500" r="5.300" fill="none" stroke="#fff" strokeWidth="1.100" /><path d="M5.800 10.300L1 15" stroke="#fff" strokeWidth="1.300" /></svg>
        </div>
        <div className="w-[152px] ml-[7px] pt-[2px] flex items-center border-b-[3px] border-[#76b9ed] pl-[9px]">
          <svg viewBox="0 0 13 20" className="w-[13px] h-5"><path d="M0 2l5-1v18l-5-1z" fill="#e4b74b" /><path d="M5 4h8v13H5z" fill="#f7dd8b" /></svg>
          <span className="ml-[12px] whitespace-nowrap">Учет выпуска изде...</span>
        </div>
        <div className="w-[48px] ml-[5px] flex items-center justify-center">
          <svg viewBox="0 0 24 24" className="w-6 h-6"><path d="M12 0C5 0 0 5.500 0 12c0 7 5.500 12 12 12 3 0 6-1 8-3-4 1.500-9 0-10-3-1-2 0-5 3-6 3-1 6 0 11 1 .5-7-4-13-12-13z" fill="#2a9fd8" /><path d="M24 13c0-7-5-13-12-13C7 0 3 3 1 7c3-4 9-4 13-1 2 2 1 5-1 6 3-1 7 0 11 1z" fill="#53cf73" /><path d="M0 12c0 7 5.500 12 12 12 3 0 6-1 8-3-4 1.500-9 0-10-3-1-3 .5-5 3-6-5-1-9 0-13 0z" fill="#0f5a9e" /></svg>
        </div>
        <div className="w-[48px] ml-px flex items-center justify-center">
          <div className="w-6 h-6 rounded-full bg-[#f0272d] flex items-center justify-center text-white font-bold text-[16px] font-['Liberation_Sans']">Я</div>
        </div>
        <div className="w-[145px] ml-[5px] pt-[2px] flex items-center border-b-[3px] border-[#76b9ed] pl-[7px]">
          <svg viewBox="0 0 24 24" className="w-[23px] h-[23px] shrink-0"><circle cx="12" cy="12" r="12" fill="#e8453c" /><path d="M12 12L1.500 6A12 12 0 0 0 12 24l5.500-9z" fill="#34a853" /><path d="M12 6h10.500A12 12 0 0 1 12 24l5.500-9z" fill="#fbbc05" /><circle cx="12" cy="12" r="5.500" fill="#fff" /><circle cx="12" cy="12" r="4.300" fill="#4285f4" /></svg>
          <span className="ml-[4px] whitespace-nowrap">Добавление работ...</span>
        </div>
        <div className="w-[161px] ml-3 pt-[2px] flex items-center bg-[#4b5f68] border-b-[3px] border-[#76b9ed] pl-[9px]">
          <svg viewBox="0 0 24 24" className="w-[24px] h-[22px] shrink-0"><rect x="1" y="2" width="17" height="20" fill="#f3d5e2" stroke="#b01e5c" /><path d="M5 20L12 3h4l3 17h-4l-.6-4H10l-1.500 4z" fill="#b01e5c" /><rect x="15" y="6" width="8" height="12" fill="#fff" opacity=".8" /></svg>
          <span className="ml-[5px] whitespace-nowrap text-[11.6px]">Microsoft Access - ...</span>
        </div>
        <div className="flex-1 flex items-center justify-end">
          <svg viewBox="0 0 16 16" className="w-[17px] h-[17px]"><rect x="0" y="0" width="8" height="8" fill="#cf6a2c" /><rect x="8" y="0" width="8" height="8" fill="#3f7fc4" /><rect x="0" y="8" width="8" height="8" fill="#4fa14a" /><rect x="8" y="8" width="8" height="8" fill="#d9343a" /></svg>
          <div className="w-[12px] h-[17px] ml-[9px] rounded-[5px] bg-[#1a82e8] flex items-center justify-center">
            <svg viewBox="0 0 8 12" className="w-2 h-3"><path d="M1 3l6 5-3 3V1l3 3-6 5" fill="none" stroke="#fff" /></svg>
          </div>
          <svg viewBox="0 0 16 10" className="w-4 h-[10px] ml-[10px]"><rect x="3.500" y="1.500" width="11" height="7" fill="none" stroke="#fff" /><rect x="5" y="3" width="7" height="4" fill="#fff" /><path d="M0 3h3M0 6h3M15 4h1v2h-1z" stroke="#fff" /></svg>
          <svg viewBox="0 0 14 12" className="w-[14px] h-3 ml-[10px]"><path d="M1 11.500a10 10 0 0 1 11-10M4 11.500a7 7 0 0 1 8-7" fill="none" stroke="#8f9ba1" /><path d="M7 11.500a4 4 0 0 1 5-4" fill="none" stroke="#fff" /><circle cx="11.500" cy="11" r="1" fill="#fff" /></svg>
          <svg viewBox="0 0 16 14" className="w-4 h-[14px] ml-[7px]"><path d="M.5 4.500h3l4-3.500v12l-4-3.500h-3z" fill="none" stroke="#fff" /><path d="M10 4.500q1.500 2.500 0 5" fill="none" stroke="#fff" /><path d="M12.500 2.500q2.500 4.500 0 9" fill="none" stroke="#76858d" /></svg>
          <span className="ml-[11px] w-[23px] text-[11.500px] whitespace-nowrap">РУС</span>
          <div className="w-[78px] pb-[2px] flex flex-col items-center leading-[19px] text-[11.500px]"><span>14:05</span><span>02.07.2022</span></div>
        </div>
      </div>
    </div>
  );
}
